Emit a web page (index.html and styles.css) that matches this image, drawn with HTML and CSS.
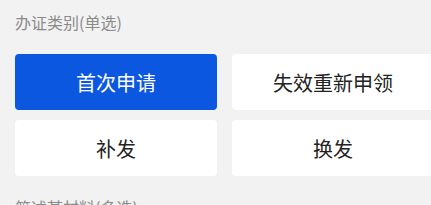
FILE: index.html
```html
<!DOCTYPE html>
<html lang="zh-CN">
<head>
<meta charset="utf-8">
<title>办证类别</title>
<link rel="stylesheet" href="styles.css">
</head>
<body>
<div class="page">
  <div class="section-title">办证类别(单选)</div>
  <div class="options">
    <div class="option selected">首次申请</div>
    <div class="option">失效重新申领</div>
    <div class="option">补发</div>
    <div class="option">换发</div>
  </div>
  <div class="section-title next">简述某材料(多选)</div>
</div>
</body>
</html>
```
FILE: styles.css
```css
html, body {
  margin: 0;
  padding: 0;
  background: #f2f2f2;
  overflow: hidden;
}
.page {
  width: 431px;
  height: 205px;
  padding: 11px 0 0 15px;
  box-sizing: border-box;
  font-family: "Noto Sans CJK SC", "Noto Sans", sans-serif;
  overflow: hidden;
}
.section-title {
  font-size: 16px;
  line-height: 22px;
  color: #8a8a8a;
}
.section-title.next {
  margin-top: 20px;
}
.options {
  margin-top: 21px;
  display: grid;
  grid-template-columns: 202px 202px;
  grid-auto-rows: 56px;
  column-gap: 15px;
  row-gap: 10px;
}
.option {
  background: #ffffff;
  border-radius: 4px;
  display: flex;
  align-items: center;
  justify-content: center;
  font-size: 20px;
  color: #222222;
}
.option.selected {
  background: #0b57e0;
  color: #ffffff;
}
```
